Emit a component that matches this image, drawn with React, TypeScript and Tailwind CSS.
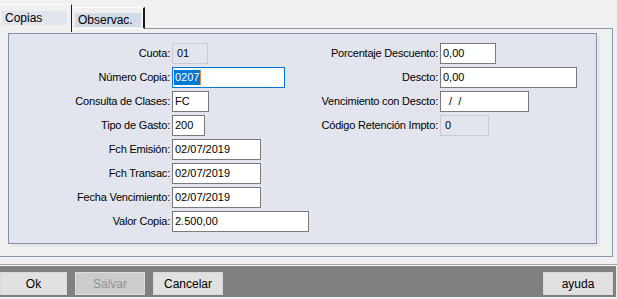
import React from 'react';

type Field = { label: string; value: string; w: string; kind?: 'normal' | 'disabled' | 'focus' };

const leftFields: Field[] = [
  { label: 'Cuota:', value: '01', w: 'w-[36px]', kind: 'disabled' },
  { label: 'Número Copia:', value: '0207', w: 'w-[113px]', kind: 'focus' },
  { label: 'Consulta de Clases:', value: 'FC', w: 'w-[37px]' },
  { label: 'Tipo de Gasto:', value: '200', w: 'w-[33px]' },
  { label: 'Fch Emisión:', value: '02/07/2019', w: 'w-[89px]' },
  { label: 'Fch Transac:', value: '02/07/2019', w: 'w-[89px]' },
  { label: 'Fecha Vencimiento:', value: '02/07/2019', w: 'w-[89px]' },
  { label: 'Valor Copia:', value: '2.500,00', w: 'w-[137px]' },
];

const rightFields: Field[] = [
  { label: 'Porcentaje Descuento:', value: '0,00', w: 'w-[56px]' },
  { label: 'Descto:', value: '0,00', w: 'w-[137px]' },
  { label: 'Vencimiento con Descto:', value: '\u00a0\u00a0/\u00a0\u00a0/', w: 'w-[89px]' },
  { label: 'Código Retención Impto:', value: '0', w: 'w-[49px]', kind: 'disabled' },
];

const Box: React.FC<{ f: Field }> = ({ f }) => {
  if (f.kind === 'disabled') {
    return (
      <div className={`${f.w} h-[21px] border border-[#c9cbd0] bg-[#e2e5ee] pl-[4px] flex items-center text-black`}>
        {f.value}
      </div>
    );
  }
  if (f.kind === 'focus') {
    return (
      <div className={`${f.w} h-[21px] border border-[#0078d7] bg-white pl-[1px] flex items-center`}>
        <span className="bg-[#0078d7] text-white leading-[15px] px-[1px]">{f.value}</span>
        <span className="w-[1px] h-[15px] bg-[#d08a3a]" />
      </div>
    );
  }
  return (
    <div className={`${f.w} h-[21px] border border-[#7a7a7a] bg-white pl-[2px] flex items-center text-black whitespace-pre`}>
      {f.value}
    </div>
  );
};

const FieldGrid: React.FC<{ fields: Field[]; labelW: string }> = ({ fields, labelW }) => (
  <div className={`grid ${labelW} gap-x-[2px] gap-y-[3px] content-start`}>
    {fields.map((f) => (
      <React.Fragment key={f.label}>
        <div className="h-[21px] flex items-center justify-end text-black whitespace-nowrap tracking-[-0.2px]">{f.label}</div>
        <Box f={f} />
      </React.Fragment>
    ))}
  </div>
);

const Btn: React.FC<{ label: string; w: string; disabled?: boolean; className?: string }> = ({ label, w, disabled, className }) => (
  <button
    className={`${w} h-[23px] border flex items-center justify-center text-[12px] ${
      disabled ? 'bg-[#cccccc] border-[#dcdcdc] text-[#939393]' : 'bg-[#e1e1e1] border-[#d8d8d8] text-black'
    } ${className ?? ''}`}
  >
    {label}
  </button>
);

export default function App() {
  return (
    <div className="w-[617px] h-[299px] bg-[#f0f0f0] overflow-hidden font-['Liberation_Sans',Arial,sans-serif] text-[11px] flex flex-col">
      {/* tabs */}
      <div className="h-[28px] flex items-start shrink-0 relative z-10">
        <div className="mt-[4px] w-[72px] h-[28px] bg-[#f0f0f0] border-t border-white border-r border-r-[#1a1a1a] pt-[6px] pl-[2px]">
          <div className="w-[65px] h-[14px] bg-[#e1e5ee] flex items-center pl-[3px] text-[12px] text-black">Copias</div>
        </div>
        <div className="mt-[7px] w-[73px] h-[22px] bg-[#f0f0f0] border-t border-white border-r-2 border-r-[#1a1a1a] border-b border-b-white pt-[5px] pl-[3px]">
          <div className="w-[66px] h-[14px] bg-[#d3dae9] flex items-center pl-[3px] text-[12px] text-black">Observac.</div>
        </div>
      </div>

      {/* outer page */}
      <div className="w-[613px] h-[229px] shrink-0 border-t border-r border-b border-[#8d9ab0] pt-[4px] pl-[8px]">
        <div className="w-[589px] h-[211px] bg-[#e2e5ee] border border-[#8491a8] shadow-[3px_3px_0_#e5e7ef] pt-[9px] flex">
          <FieldGrid fields={leftFields} labelW="grid-cols-[161px_auto] w-[300px]" />
          <FieldGrid fields={rightFields} labelW="grid-cols-[129px_auto]" />
        </div>
      </div>

      <div className="h-[7px] shrink-0" />
      <div className="h-[1px] bg-[#a0a0a0] shrink-0" />
      <div className="h-[1px] bg-white shrink-0" />

      {/* toolbar */}
      <div className="w-[616px] h-[31px] bg-[#808080] shrink-0 flex items-start pt-[6px] gap-[8px] pr-[3px]">
        <Btn label="Ok" w="w-[67px]" />
        <Btn label="Salvar" w="w-[70px]" disabled />
        <Btn label="Cancelar" w="w-[70px]" />
        <Btn label="ayuda" w="w-[70px]" className="ml-auto" />
      </div>
    </div>
  );
}
